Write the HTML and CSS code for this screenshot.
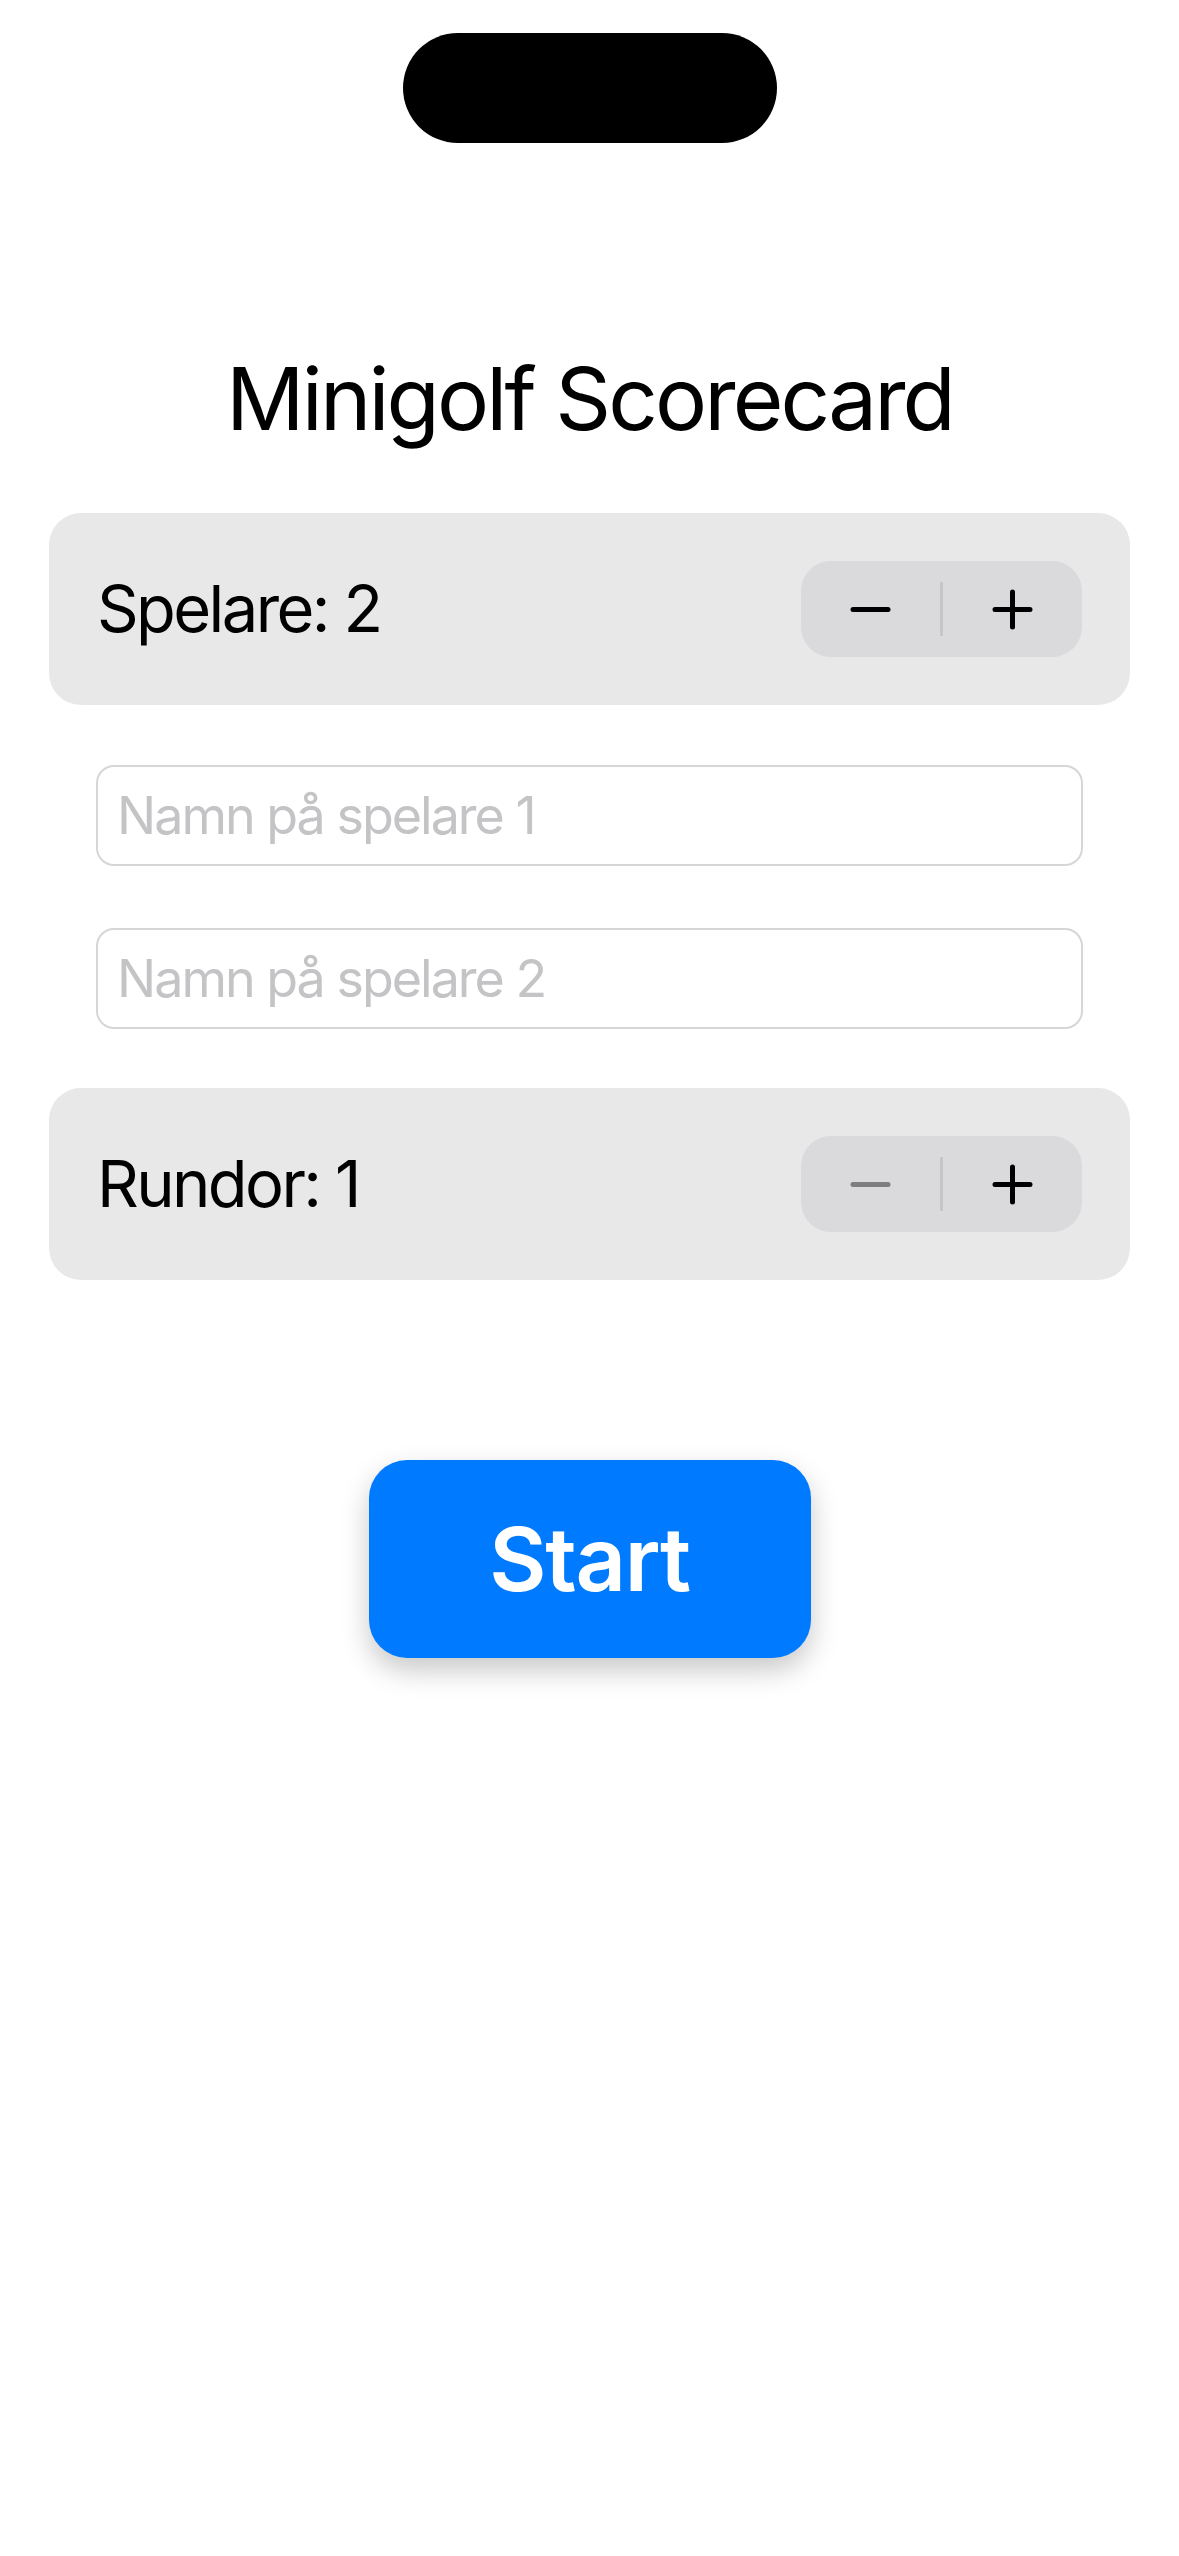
FILE: index.html
```html
<!DOCTYPE html>
<html lang="sv">
<head>
<meta charset="utf-8">
<title>Minigolf Scorecard</title>
<link rel="stylesheet" href="styles.css">
</head>
<body>
<div class="screen">
  <div class="island-row"><div class="island"></div></div>
  <h1 class="title">Minigolf Scorecard</h1>
  <div class="card">
    <span class="label">Spelare: 2</span>
    <div class="stepper">
      <div class="step-btn">
        <svg class="icon" viewBox="0 0 41 41"><path d="M3 20.5H38" stroke="#000" stroke-width="5" stroke-linecap="round"/></svg>
      </div>
      <div class="divider"></div>
      <div class="step-btn">
        <svg class="icon" viewBox="0 0 41 41"><path d="M3 20.5H38M20.5 3V38" stroke="#000" stroke-width="5" stroke-linecap="round"/></svg>
      </div>
    </div>
  </div>
  <div class="field"><span class="placeholder">Namn på spelare 1</span></div>
  <div class="field"><span class="placeholder">Namn på spelare 2</span></div>
  <div class="card">
    <span class="label">Rundor: 1</span>
    <div class="stepper">
      <div class="step-btn">
        <svg class="icon" viewBox="0 0 41 41"><path d="M3 20.5H38" stroke="#7e7e80" stroke-width="5" stroke-linecap="round"/></svg>
      </div>
      <div class="divider"></div>
      <div class="step-btn">
        <svg class="icon" viewBox="0 0 41 41"><path d="M3 20.5H38M20.5 3V38" stroke="#000" stroke-width="5" stroke-linecap="round"/></svg>
      </div>
    </div>
  </div>
  <div class="start-row"><button class="start">Start</button></div>
</div>
</body>
</html>
```
FILE: styles.css
```css
html, body {
  margin: 0;
  padding: 0;
  background: #ffffff;
}
body {
  font-family: Inter, "Noto Sans", "Liberation Sans", sans-serif;
  color: #000;
}
.screen {
  width: 1179px;
  min-height: 2556px;
  display: flex;
  flex-direction: column;
  align-items: center;
  padding-top: 33px;
  box-sizing: border-box;
}
.island-row {
  display: flex;
  justify-content: center;
  width: 100%;
}
.island {
  width: 374px;
  height: 110px;
  background: #000;
  border-radius: 55px;
}
.title {
  margin: 203px 0 0 0;
  font-size: 87px;
  font-weight: 400;
  line-height: 106px;
  letter-spacing: -2.9px;
}
.card {
  box-sizing: border-box;
  width: 1081px;
  height: 192px;
  margin-top: 61px;
  background: #e8e8e8;
  border-radius: 32px;
  padding: 0 48px 0 48px;
  display: flex;
  align-items: center;
  justify-content: space-between;
}
.field + .card { margin-top: 59px; }
.label {
  font-size: 65px;
  line-height: 80px;
  letter-spacing: -2.6px;
}
.stepper {
  width: 281px;
  height: 96px;
  background: #dadadc;
  border-radius: 30px;
  display: flex;
  align-items: center;
}
.step-btn {
  flex: 1;
  height: 100%;
  display: flex;
  align-items: center;
  justify-content: center;
}
.icon {
  width: 41px;
  height: 41px;
  display: block;
}
.divider {
  width: 3px;
  height: 54px;
  background: #c6c6c8;
}
.field {
  box-sizing: border-box;
  width: 987px;
  height: 101px;
  margin-top: 60px;
  border: 2px solid #d6d6d8;
  border-radius: 18px;
  padding-left: 19px;
  display: flex;
  align-items: center;
}
.field + .field { margin-top: 62px; }
.placeholder {
  font-size: 52px;
  line-height: 64px;
  color: #c4c4c6;
  letter-spacing: -2px;
}
.start-row {
  margin-top: 180px;
  display: flex;
  justify-content: center;
  width: 100%;
}
.start {
  width: 442px;
  height: 198px;
  border: none;
  border-radius: 38px;
  background: #007aff;
  color: #fff;
  font-family: Inter, "Noto Sans", "Liberation Sans", sans-serif;
  font-size: 88px;
  font-weight: 600;
  line-height: 106px;
  letter-spacing: -1.3px;
  box-shadow: 0 12px 28px rgba(0, 0, 0, 0.22);
  padding: 0;
  cursor: pointer;
}
```
